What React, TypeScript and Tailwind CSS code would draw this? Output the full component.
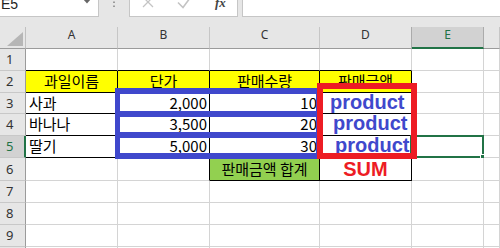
import React from 'react';

type Cell = {
  text?: string;
  align?: 'left' | 'right' | 'center';
  bg?: 'yellow' | 'green';
  kind?: 'product' | 'sum';
  pad?: string;
};

const LETTERS = ['A', 'B', 'C', 'D', 'E', ''];

const sheet: Record<number, Cell[]> = {
  2: [
    { text: '과일이름', align: 'center', bg: 'yellow' },
    { text: '단가', align: 'center', bg: 'yellow' },
    { text: '판매수량', align: 'center', bg: 'yellow' },
    { text: '판매금액', align: 'center', bg: 'yellow' },
  ],
  3: [
    { text: '사과' },
    { text: '2,000', align: 'right' },
    { text: '10', align: 'right' },
    { text: 'product', kind: 'product', pad: 'pl-[10px]' },
  ],
  4: [
    { text: '바나나' },
    { text: '3,500', align: 'right' },
    { text: '20', align: 'right' },
    { text: 'product', kind: 'product', pad: 'pl-[13px]' },
  ],
  5: [
    { text: '딸기' },
    { text: '5,000', align: 'right' },
    { text: '30', align: 'right' },
    { text: 'product', kind: 'product', pad: 'pl-[15px]' },
  ],
  6: [{}, {}, { text: '판매금액 합계', align: 'center', bg: 'green' }, { text: 'SUM', kind: 'sum' }],
};

// cells that carry black borders
const boxed = (r: number, c: number) =>
  (r >= 2 && r <= 5 && c >= 0 && c <= 3) || (r === 6 && (c === 2 || c === 3));

const KR = "font-['Noto_Sans_CJK_KR','Noto_Sans',sans-serif]";

const SheetCell: React.FC<{ r: number; c: number }> = ({ r, c }) => {
  const cell = sheet[r]?.[c] ?? {};
  const bottom = boxed(r, c) || boxed(r + 1, c) ? 'border-b-black' : 'border-b-[#d4d4d4]';
  const right = boxed(r, c) || boxed(r, c + 1) ? 'border-r-black' : 'border-r-[#d4d4d4]';
  const bg = cell.bg === 'yellow' ? 'bg-[#ffff00]' : cell.bg === 'green' ? 'bg-[#92d050]' : 'bg-white';
  const align =
    cell.align === 'right' ? 'justify-end pr-[2px]' : cell.align === 'center' ? 'justify-center' : 'justify-start pl-[3px]';
  const selected = r === 5 && c === 4;

  let content: React.ReactNode = null;
  if (cell.kind === 'product') {
    content = (
      <span className={`${cell.pad} mt-[-1px] self-start font-['Liberation_Sans',sans-serif] text-[20px] font-bold leading-[20px] text-[#3f48cc]`}>
        {cell.text}
      </span>
    );
  } else if (cell.kind === 'sum') {
    content = (
      <span className="mt-[1px] self-start font-['Liberation_Sans',sans-serif] text-[20px] font-bold leading-[20px] text-[#ed1c24]">
        {cell.text}
      </span>
    );
  } else if (cell.text) {
    content = <span className={`${KR} pb-[2px] text-[15px] leading-[15px] text-black whitespace-pre`}>{cell.text}</span>;
  }

  return (
    <div
      className={`relative box-border flex items-center border-b border-r ${bottom} ${right} ${bg} ${
        cell.kind === 'sum' ? 'justify-center' : cell.kind === 'product' ? 'justify-start' : align
      }`}
    >
      {content}
      {selected && (
        <div className="absolute -top-[1px] -left-[2px] -right-[1px] -bottom-[1px] border-2 border-[#217346]">
          <div className="absolute -right-[4px] -bottom-[4px] h-[6px] w-[6px] border border-white bg-[#217346]" />
        </div>
      )}
    </div>
  );
};

const App: React.FC = () => {
  const rows = [1, 2, 3, 4, 5, 6, 7, 8, 9, 10];

  return (
    <div className="relative h-[248px] w-[500px] overflow-hidden bg-[#e6e6e6]">
      {/* formula bar */}
      <div className="flex h-[17px]">
        <div className="box-border flex w-[99px] border-b border-r border-[#c6c6c6] bg-white">
          <span className="ml-[1px] mt-[-3px] font-['Liberation_Sans',sans-serif] text-[14px] leading-[14px] text-[#222]">E5</span>
          <svg className="ml-auto mr-[7px] mt-[-1px]" width="8" height="5" viewBox="0 0 8 5">
            <path d="M0 0h8L4 4.5z" fill="#666" />
          </svg>
        </div>
        <div className="w-[30px]">
          <svg width="30" height="16" viewBox="0 0 30 16">
            <rect x="14" y="1.5" width="2" height="1.5" fill="#9a9a9a" />
            <rect x="14" y="5.5" width="2" height="1.5" fill="#9a9a9a" />
          </svg>
        </div>
        <div className="box-border flex w-[109px] border-x border-b border-[#c6c6c6] bg-white">
          <svg width="62" height="16" viewBox="0 0 62 16">
            <path d="M13 -3L23 7M23 -3L13 7" stroke="#c4c4c4" strokeWidth="1.3" fill="none" />
            <path d="M48 2.5L53 7.5L60 -2" stroke="#c4c4c4" strokeWidth="1.6" fill="none" />
          </svg>
          <span className="ml-[23px] mt-[-4px] font-['Liberation_Serif',serif] text-[13px] font-bold italic leading-[13px] text-[#444]">
            fx
          </span>
        </div>
        <div className="ml-[4px] flex-1 border-b border-l border-[#c6c6c6] bg-white" />
      </div>
      <div className="h-[10px]" />

      {/* grid */}
      <div className="grid grid-cols-[26px_92px_92px_110px_92px_72px_1fr] grid-rows-[22px_22px_22px_21px_22px_22px_23px_22px_22px_22px_22px]">
        {/* column headers */}
        <div className="box-border flex items-end justify-end border-b border-r border-b-[#9b9b9b] border-r-[#c0c0c0]">
          <svg className="mb-[2px] mr-[2px]" width="16" height="14" viewBox="0 0 16 14">
            <path d="M16 0V14H0z" fill="#b6b6b6" />
          </svg>
        </div>
        {LETTERS.map((l, i) =>
          l === 'E' ? (
            <div
              key={i}
              className="box-border flex justify-center border-b-2 border-r border-b-[#217346] border-r-[#ababab] bg-[#d2d2d2] pt-[2px] font-['Noto_Sans',sans-serif] text-[12px] leading-[12px] text-[#217346]"
            >
              {l}
            </div>
          ) : (
            <div
              key={i}
              className={`box-border flex justify-center border-b border-r border-b-[#9b9b9b] ${
                l === 'D' ? 'border-r-[#ababab]' : 'border-r-[#c6c6c6]'
              } pt-[2px] font-['Noto_Sans',sans-serif] text-[12px] leading-[12px] text-[#333]`}
            >
              {l}
            </div>
          )
        )}

        {rows.map((r) => (
          <React.Fragment key={r}>
            <div
              className={`box-border flex items-center border-b border-b-[#c8c8c8] pl-[6px] font-['Noto_Sans',sans-serif] text-[13px] leading-[13px] ${
                r === 5
                  ? 'border-r-2 border-r-[#217346] bg-[#d2d2d2] text-[#217346]'
                  : 'border-r border-r-[#9b9b9b] text-[#333]'
              }`}
            >
              {r < 10 ? r : ''}
            </div>
            {[0, 1, 2, 3, 4, 5].map((c) => (
              <SheetCell key={c} r={r} c={c} />
            ))}
          </React.Fragment>
        ))}
      </div>

      {/* paint annotations over the sheet */}
      <div className="absolute left-[115px] top-[88px] h-[29px] w-[207px] border-[6px] border-l-[5px] border-[#3f48cc]" />
      <div className="absolute left-[115px] top-[111px] h-[27px] w-[207px] border-[6px] border-l-[5px] border-[#3f48cc]" />
      <div className="absolute left-[115px] top-[132px] h-[27px] w-[207px] border-[6px] border-l-[5px] border-[#3f48cc]" />
      <div className="absolute left-[317px] top-[83px] h-[76px] w-[100px] border-[6px] border-[#ed1c24]" />
    </div>
  );
};

export default App;
